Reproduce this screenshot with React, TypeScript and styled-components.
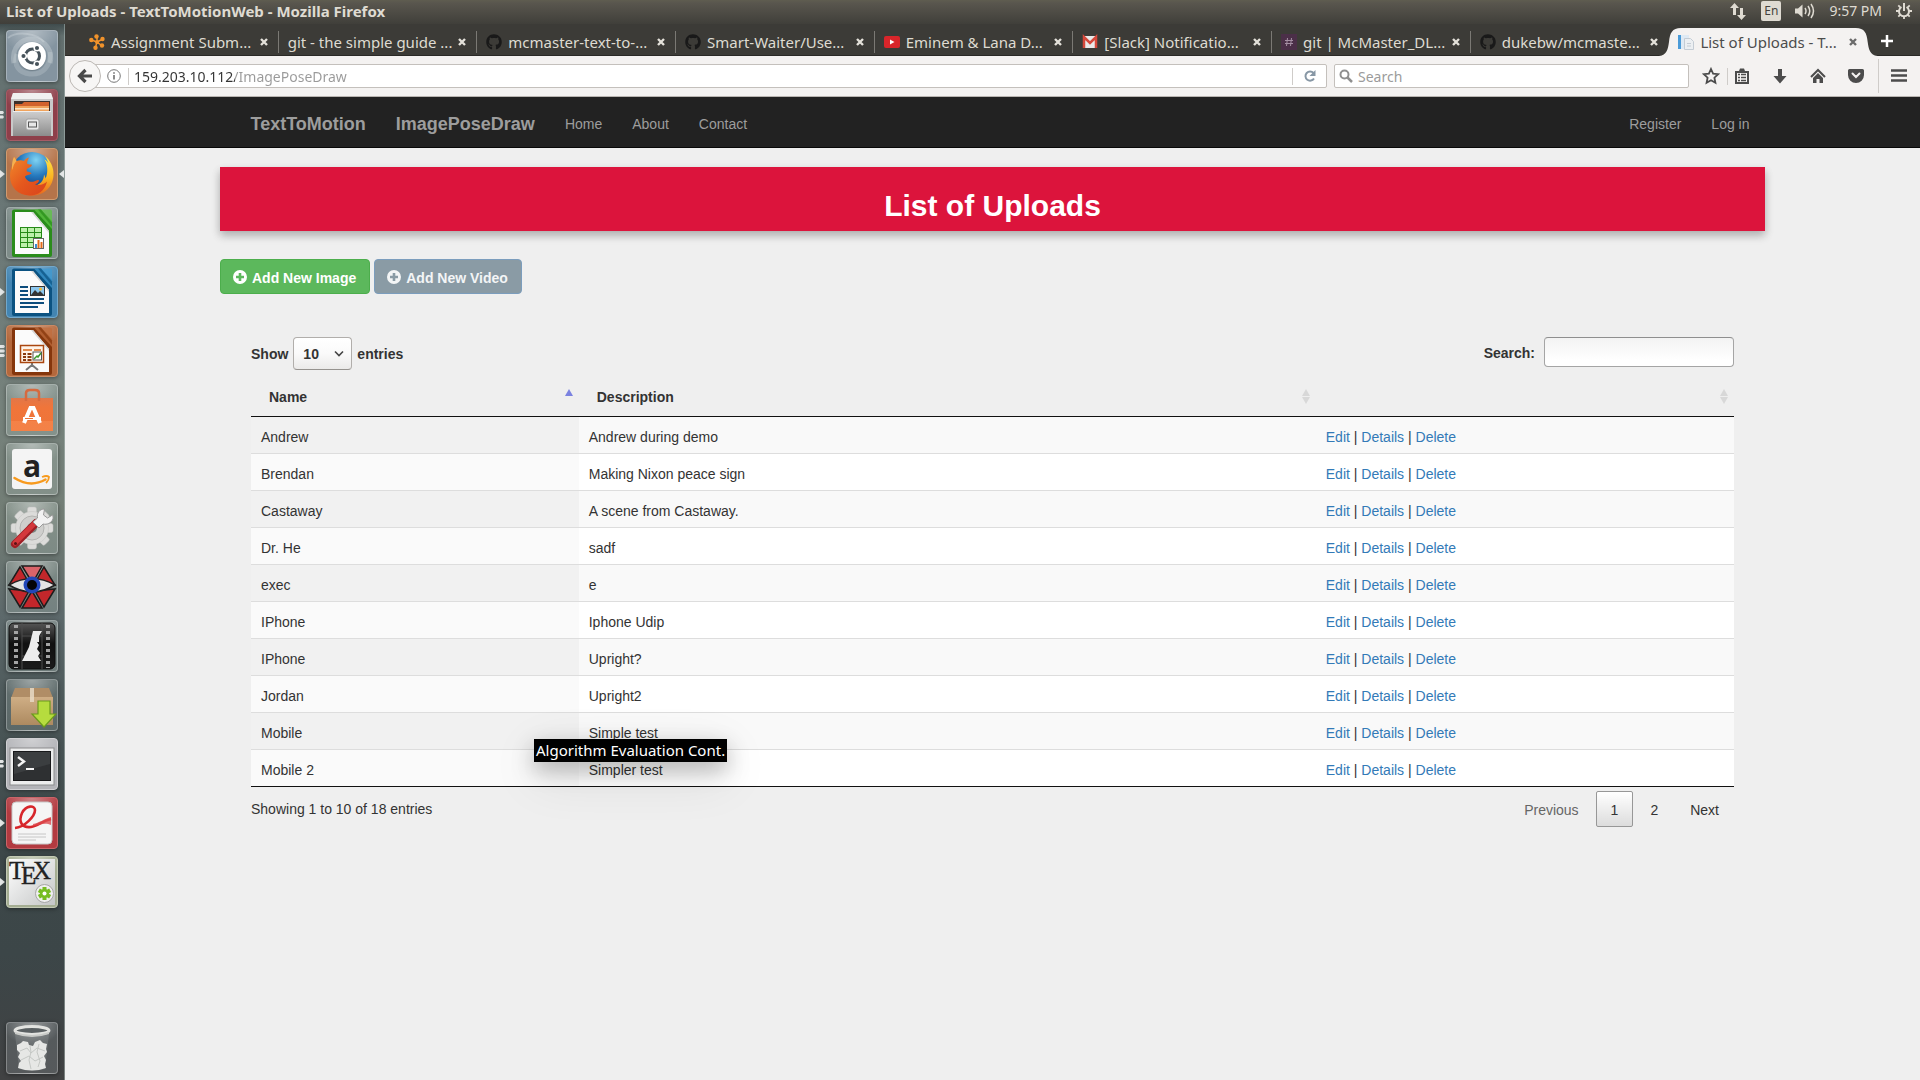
import React from "react";
import styled, { createGlobalStyle, css } from "styled-components";
import { FaGithub } from "react-icons/fa";

const uiFont = `"Noto Sans", "Open Sans", sans-serif`;
const pageFont = `"Liberation Sans", Arial, sans-serif`;

const GlobalStyle = createGlobalStyle`
  *, *::before, *::after { box-sizing: border-box; }
  body { margin: 0; background: #efefef; }
  button, input, select { font: inherit; color: inherit; margin: 0; }
  button { border: 0; background: none; padding: 0; cursor: pointer; }
  svg { display: block; flex: none; }
`;

const Desktop = styled.div`
  min-height: 100vh;
  display: flex;
  flex-direction: column;
  font-family: ${uiFont};
  font-size: 14px;
  overflow: hidden;
`;

/* ---------- system panel ---------- */

const Panel = styled.header`
  height: 24px;
  flex: none;
  display: flex;
  align-items: center;
  padding: 0 8px 2px 6px;
  background: linear-gradient(#5f5d50 0, #59564e 3px, #403f3a 100%);
  color: #dfdbd2;
`;
const WindowTitle = styled.div`
  font-size: 15px;
  font-weight: 700;
  line-height: 20px;
  flex: 1;
`;
const Indicators = styled.div`
  display: flex;
  align-items: center;
  gap: 14px;
  line-height: 20px;
`;
const Lang = styled.span`
  width: 20px;
  height: 20px;
  border-radius: 2px;
  background: #dfdbd2;
  color: #45433d;
  font-size: 12px;
  line-height: 20px;
  text-align: center;
`;

const Body = styled.div`
  flex: 1;
  display: flex;
`;

/* ---------- launcher ---------- */

const Launcher = styled.nav`
  width: 65px;
  flex: none;
  display: flex;
  flex-direction: column;
  gap: 7px;
  padding: 6px 0;
  border-right: 1px solid rgba(190, 205, 200, 0.45);
  background: linear-gradient(
    #3f4b4c 0, #63706f 12px, #6b7877 20%, #76827c 36%, #727d75 47%,
    #5d696b 56%, #4a5657 66%, #3d4849 78%, #3c4648 88%, #414243 100%
  );
`;
const LauncherRow = styled.div<{ $last?: boolean }>`
  display: flex;
  align-items: center;
  ${(p) => p.$last && css`margin-top: auto;`}
`;
const Mark = styled.span`
  width: 6px;
  flex: none;
`;
const Tile = styled.button<{ $tint: string; $edge?: string }>`
  width: 52px;
  height: 52px;
  flex: none;
  border-radius: 4px;
  overflow: hidden;
  border: 1px solid ${(p) => p.$edge || "rgba(255,255,255,.28)"};
  background:
    radial-gradient(ellipse 60% 45% at 50% 0, rgba(255, 255, 255, 0.38), rgba(255, 255, 255, 0) 100%),
    ${(p) => p.$tint};
  box-shadow: 0 1px 4px rgba(0, 0, 0, 0.4);
  & > svg { margin: -1px; }
`;

/* ---------- browser ---------- */

const Browser = styled.div`
  flex: 1;
  min-width: 0;
  display: flex;
  flex-direction: column;
`;
const TabStrip = styled.div`
  height: 32px;
  flex: none;
  display: flex;
  padding-left: 15px;
  background: #3c3b37;
  border-bottom: 1px solid #2a2926;
`;
const Tab = styled.div<{ $active?: boolean; $rule?: boolean }>`
  position: relative;
  flex: 1;
  min-width: 0;
  display: flex;
  align-items: center;
  padding: 4px 9px 0 9px;
  font-size: 15px;
  line-height: 20px;
  color: ${(p) => (p.$active ? "#4c4c4c" : "#dfdbd2")};
  ${(p) => p.$rule && css`
    background: linear-gradient(#7b7974, #7b7974) right 7px / 1px 22px no-repeat;
  `}
`;
const ActiveShape = styled.svg`
  position: absolute;
  left: -10px;
  top: 4px;
  width: calc(100% + 20px);
  height: 28px;
`;
const TabLabel = styled.button`
  position: relative;
  flex: 1;
  min-width: 0;
  display: flex;
  align-items: center;
  gap: 6px;
  white-space: nowrap;
  text-align: left;
`;
const TabClose = styled.button`
  position: relative;
  width: 12px;
  height: 12px;
`;
const NewTab = styled.button`
  width: 52px;
  padding: 3px 0 0 12px;
`;

const Toolbar = styled.div`
  height: 41px;
  flex: none;
  display: flex;
  align-items: center;
  padding: 0 13px 0 4px;
  background: #f4f2f1;
  border-bottom: 1px solid #b9b5b1;
`;
const Back = styled.button`
  position: relative;
  z-index: 1;
  width: 32px;
  height: 32px;
  flex: none;
  display: grid;
  place-items: center;
  border-radius: 50%;
  border: 1px solid #bcb8b4;
  background: #f7f6f5;
`;
const field = css`
  height: 24px;
  display: flex;
  align-items: center;
  background: #fff;
  border: 1px solid #c4c0bc;
`;
const UrlBox = styled.div`
  ${field}
  flex: 1;
  min-width: 0;
  margin-left: -8px;
  padding-left: 13px;
  border-radius: 0 2px 2px 0;
`;
const Divider = styled.span<{ $tall?: boolean }>`
  width: 1px;
  height: ${(p) => (p.$tall ? "34px" : "17px")};
  background: #cfccc9;
`;
const UrlInput = styled.input`
  flex: 1;
  min-width: 0;
  height: 22px;
  margin: 0 5px;
  padding: 0;
  border: 0;
  outline: 0;
  color: transparent;
  background: linear-gradient(90deg, #333 101px, #9a9a9a 101px);
  -webkit-background-clip: text;
  background-clip: text;
`;
const ToolGap = styled.span<{ $w: number }>`
  width: ${(p) => p.$w}px;
  flex: none;
`;
const ToolButton = styled.button`
  width: 38px;
  height: 24px;
  flex: none;
  display: grid;
  place-items: center;
`;
const Reload = styled(ToolButton)`
  width: 33px;
`;
const StarButton = styled(ToolButton)`
  width: 32px;
`;
const ClipButton = styled(ToolButton)`
  width: 28px;
  margin-right: 5px;
`;
const MenuButton = styled(ToolButton)`
  width: 28px;
  padding-left: 12px;
`;
const SearchBox = styled.label`
  ${field}
  width: 355px;
  margin: 0 6px 0 7px;
  padding-left: 4px;
  gap: 5px;
  border-radius: 2px;
`;
const BrowserSearch = styled.input`
  flex: 1;
  min-width: 0;
  border: 0;
  outline: 0;
  padding: 0;
  background: none;
  &::placeholder { color: #9b9b9b; opacity: 1; }
`;

/* ---------- web page ---------- */

const Page = styled.div`
  position: relative;
  flex: 1;
  background: #efefef;
  color: #333;
  font-family: ${pageFont};
  font-size: 14px;
  line-height: 20px;
`;
const Navbar = styled.nav`
  height: 51px;
  background: #222;
  border-bottom: 1px solid #080808;
`;
const NavInner = styled.div`
  width: calc(80% + 60px);
  margin: 0 auto;
  padding-left: 15px;
  display: flex;
  align-items: center;
  height: 50px;
`;
const NavLink = styled.a<{ $brand?: boolean; $push?: boolean }>`
  padding: 17px 15px 13px;
  color: #9d9d9d;
  text-decoration: none;
  ${(p) => p.$brand && css`font-size: 18px; font-weight: 700;`}
  ${(p) => p.$push && css`margin-left: auto;`}
`;
const Main = styled.main`
  width: calc(80% + 61px);
  margin: 19px auto 0;
`;
const Banner = styled.header`
  height: 64px;
  background: #dc143c;
  box-shadow: 0 4px 8px 0 rgba(0, 0, 0, 0.2), 0 5px 10px 0 rgba(0, 0, 0, 0.1);
  text-align: center;
  padding-top: 22px;
`;
const Title = styled.h1`
  margin: 0;
  color: #fff;
  font-size: 30px;
  line-height: 33px;
  font-weight: 700;
`;
const Actions = styled.div`
  display: flex;
  gap: 4px;
  margin-top: 28px;
`;
const AddLink = styled.a<{ $muted?: boolean }>`
  display: flex;
  align-items: center;
  gap: 5px;
  height: 35px;
  padding: 2px 13px 0 12px;
  border-radius: 4px;
  color: ${(p) => (p.$muted ? "#f3f5f6" : "#fff")};
  background: ${(p) => (p.$muted ? "#8a9ba5" : "#5cb85c")};
  border: 1px solid ${(p) => (p.$muted ? "#7b9dbd" : "#4cae4c")};
  font-weight: 700;
  text-decoration: none;
  & > svg { margin-top: -2px; }
`;
const TableArea = styled.section`
  margin-top: 43px;
  padding: 0 31px;
`;
const Controls = styled.div`
  display: flex;
  justify-content: space-between;
  align-items: flex-start;
  margin-bottom: 6px;
  font-weight: 700;
`;
const Length = styled.label`
  display: flex;
  align-items: center;
  gap: 5px;
`;
const SelectWrap = styled.span`
  display: grid;
  align-items: center;
  & > * { grid-area: 1 / 1; }
  & > svg { justify-self: end; margin-right: 8px; pointer-events: none; }
`;
const LengthSelect = styled.select`
  appearance: none;
  width: 59px;
  height: 33px;
  padding: 0 9px;
  border: 1px solid #b1aeab;
  border-bottom-color: #96938f;
  border-radius: 4px;
  background: linear-gradient(#fff, #fafafa 50%, #ebeae9);
`;
const Filter = styled.label`
  display: flex;
  align-items: flex-start;
  gap: 9px;
  line-height: 32px;
`;
const FilterInput = styled.input`
  width: 190px;
  height: 30px;
  padding: 0 8px;
  border: 1px solid #a5a5a5;
  border-top-color: #8f8f8f;
  border-radius: 4px;
  background: linear-gradient(#f3f3f3, #fff 80%);
`;
const Table = styled.table`
  width: 100%;
  table-layout: fixed;
  border-collapse: separate;
  border-spacing: 0;
  border-bottom: 1px solid #111;
`;
const Col = styled.col<{ $w: string }>`
  width: ${(p) => p.$w};
`;
const Th = styled.th`
  padding: 11px 5px 9px 18px;
  border-bottom: 1px solid #111;
  text-align: left;
`;
const SortButton = styled.button`
  width: 100%;
  min-height: 20px;
  display: flex;
  align-items: center;
  justify-content: space-between;
  font-weight: 700;
`;
const SortLabel = styled.span`
  flex: 1;
  text-align: left;
`;
const Tr = styled.tr`
  & > td { background: #fff; border-top: 1px solid #ddd; }
  & > td:first-child { background: #fafafa; }
  &:nth-child(odd) > td { background: #f9f9f9; }
  &:nth-child(odd) > td:first-child { background: #f1f1f1; }
  &:first-child > td { border-top: 0; }
`;
const Td = styled.td`
  padding: 10px 10px 6px;
`;
const RowLink = styled.a`
  color: #337ab7;
  text-decoration: none;
`;
const Footer = styled.div`
  display: flex;
  justify-content: space-between;
  align-items: flex-start;
  padding-top: 4px;
`;
const Info = styled.div`
  padding-top: 8px;
`;
const Pager = styled.div`
  display: flex;
  gap: 2px;
`;
const PageButton = styled.button<{ $current?: boolean; $dim?: boolean }>`
  padding: 8px 14px 6px;
  border-radius: 2px;
  border: 1px solid ${(p) => (p.$current ? "#979797" : "transparent")};
  color: ${(p) => (p.$dim ? "#666" : "#333")};
  ${(p) => p.$current && css`background: linear-gradient(#fff, #dcdcdc);`}
`;
/* Floating hint that a window below the pointer shows over the page. */
const Tooltip = styled.div`
  position: absolute;
  left: 469px;
  top: 642px;
  height: 23px;
  padding: 0 2px;
  background: #000;
  color: #fff;
  font-family: ${uiFont};
  font-size: 15px;
  line-height: 22px;
  white-space: nowrap;
  box-shadow: 0 8px 22px rgba(0, 0, 0, 0.28), 0 14px 50px rgba(0, 0, 0, 0.12);
`;

/* ---------- launcher drawings ---------- */

const Icon = ({ children }: { children: React.ReactNode }) => (
  <svg width="52" height="52" viewBox="0 0 52 52" aria-hidden="true">{children}</svg>
);

const UbuntuIcon = () => (
  <Icon>
    <g fill="none" stroke="#dfe6e8" strokeOpacity=".3" strokeWidth="5">
      <path d="M8 33C5 17 16 8 27 9c13 1 20 13 17 24" />
      <path d="M44 22c1 15-8 23-20 22C13 43 7 35 11 24" strokeOpacity=".22" />
      <path d="M2 8c10-8 30-4 36 4" strokeWidth="2" />
    </g>
    <circle cx="26" cy="27" r="14" fill="#56646a" opacity=".35" />
    <circle cx="26" cy="26" r="14" fill="#fff" />
    <circle cx="26.500" cy="26" r="7" fill="none" stroke="#46525a" strokeWidth="3" />
    <g stroke="#fff" strokeWidth="1.500" fill="#46525a">
      <circle cx="17.500" cy="26" r="2.800" />
      <circle cx="31" cy="18" r="2.800" />
      <circle cx="31" cy="34" r="2.800" />
    </g>
  </Icon>
);

const FilesIcon = () => (
  <Icon>
    <defs>
      <linearGradient id="fl" x1="0" y1="0" x2="0" y2="1">
        <stop offset="0" stopColor="#cfcfcf" /><stop offset="1" stopColor="#8c8c8c" />
      </linearGradient>
    </defs>
    <path d="M7 4h38l2 6v37H5V10z" fill="#c9c9c9" />
    <path d="M7 4h38l2 6H5z" fill="#f0f0f0" />
    <rect x="8" y="12" width="36" height="12" fill="#3c302c" />
    <path d="M9 15h7l2-2h25v11H9z" fill="#d2622c" />
    <path d="M9 17h34v7H9z" fill="#f0a35c" />
    <path d="M9 19h34v1.500H9z" fill="#fbe3c4" />
    <path d="M7 22h38v25H7z" fill="url(#fl)" />
    <path d="M7 22h38v1H7z" fill="#eee" />
    <rect x="20" y="30" width="13" height="11" rx="2" fill="#e9e9e9" stroke="#a0a0a0" />
    <rect x="22.500" y="33" width="8" height="5" fill="#e7e7e7" stroke="#555" />
  </Icon>
);

const FirefoxIcon = () => (
  <Icon>
    <defs>
      <radialGradient id="ffg" cx=".6" cy=".2" r=".8">
        <stop offset="0" stopColor="#7fd3f3" /><stop offset=".5" stopColor="#2578bd" /><stop offset="1" stopColor="#0f2f6d" />
      </radialGradient>
      <linearGradient id="fff" x1="0" y1="0" x2="1" y2="1">
        <stop offset="0" stopColor="#f08a2c" /><stop offset=".5" stopColor="#e5581d" /><stop offset="1" stopColor="#d8431c" />
      </linearGradient>
      <linearGradient id="ffy" x1="0" y1="0" x2="0" y2="1">
        <stop offset="0" stopColor="#ffe94a" /><stop offset=".55" stopColor="#fbb321" /><stop offset="1" stopColor="#e8641f" />
      </linearGradient>
    </defs>
    <circle cx="26" cy="24" r="20" fill="url(#ffg)" />
    <path d="M39 8c5 4 9 11 8.500 19C47 39 38 47.500 26 47.500c-6 0-11-2-14-5l14-4c8-1 12-6 12-12 1 2 1.500 3 1.500 4 3-6 2-15-1-19 2 1 3 2 4 4-1-3-2-5-3.500-7.500z" fill="url(#ffy)" />
    <path d="M8 9c1 1 2 2.500 2.500 4C13 12 16 12 18 13c1-2 3-3 5-3.500-1 2-2 4-2 6 1 1 3 1 4.500 1 1 1-1 3-4 4-1 1-1 2-.5 3 2 0 4 1 4.500 2-2 2-5 1-6.500 3 1 4 5 6 9 5 3-1 4-2 5-1 0 2-2 3-4 4 5 1 9 0 12-3-2 9-9 14-17 14C12 47.500 4 39 4 28c0-5 1-9 3-12 0-3 0-5 1-7z" fill="url(#fff)" />
    <path d="M8 9c1 1 2 2.500 2.500 4-2 2-3.500 5-4 9-1-3-.5-9 1.500-13z" fill="#f6b04f" />
  </Icon>
);

const DocBase = ({ dark, light, children }: { dark: string; light: string; children: React.ReactNode }) => (
  <Icon>
    <path d="M8 2.500h27L46 14v34a2 2 0 0 1-2 2H8a2 2 0 0 1-2-2V4.500a2 2 0 0 1 2-2z" fill={dark} />
    <path d="M28 2.500h16a2 2 0 0 1 2 2V22z" fill={light} opacity=".75" />
    <path d="M32 2.500h3l11 13v4z" fill={dark} opacity=".7" />
    <path d="M9 5h18l16 19v23H9z" fill="#fbfbfb" />
    <path d="M27 5l16 19v2L25 5z" fill="#d6d6d6" />
    {children}
  </Icon>
);

const CalcIcon = () => (
  <DocBase dark="#2a8c1b" light="#5cc443">
    <rect x="14.500" y="20.500" width="21" height="20" fill="#bdf0ab" stroke="#268a17" />
    <path d="M14 25.500h22M14 30.500h22M14 35.500h22M21.500 20v21M28.500 20v21" stroke="#268a17" />
    <rect x="27.500" y="31.500" width="10" height="10" fill="#fff" stroke="#666" />
    <path d="M29 37h2v4h-2z" fill="#3b8bd0" /><path d="M31.500 33h2v8h-2z" fill="#e46b18" /><path d="M34.500 35h2v6h-2z" fill="#e46b18" />
  </DocBase>
);

const WriterIcon = () => (
  <DocBase dark="#0b5281" light="#3d9ad2">
    <path d="M14 21h8M14 25h8M14 29h8M14 33h24M14 37h24M14 41h18" stroke="#0d4d7d" strokeWidth="2" />
    <rect x="24.500" y="20.500" width="14" height="9" fill="#8cc7ee" stroke="#333" />
    <path d="M25 29l4-5 3 3 2-2 4 4z" fill="#333" /><circle cx="34.500" cy="23" r="1.500" fill="#f4b930" />
  </DocBase>
);

const ImpressIcon = () => (
  <DocBase dark="#85360c" light="#c06c3c">
    <path d="M26 38v4M20 45l6-5 6 5" stroke="#777" strokeWidth="2" fill="none" />
    <rect x="14.500" y="20.500" width="23" height="17" fill="#fff3e8" stroke="#aa4710" strokeWidth="1.500" />
    <path d="M17 25h9M28 25h7" stroke="#e08a4d" strokeWidth="2" />
    <path d="M17 29h3M17 32h3M17 35h3M21.500 29h4M21.500 32h4M21.500 35h4" stroke="#8a3a0e" strokeWidth="2" />
    <rect x="27" y="27" width="8.500" height="8" fill="#fff" stroke="#555" />
    <path d="M28 34l3-3 1 1 3-4" stroke="#3a9a2b" strokeWidth="1.500" fill="none" />
  </DocBase>
);

const SoftwareIcon = () => (
  <Icon>
    <defs>
      <linearGradient id="sw" x1="0" y1="0" x2="0" y2="1">
        <stop offset="0" stopColor="#e27748" /><stop offset=".3" stopColor="#f0753a" /><stop offset="1" stopColor="#ee7439" />
      </linearGradient>
    </defs>
    <path d="M5 14h42v33H5z" fill="url(#sw)" />
    <path d="M20 17V9q0-3 4-3h5q4 0 4 3v8" fill="none" stroke="#d66a3f" strokeWidth="2.500" />
    <path d="M5 37h42v10H5z" fill="#f78b52" opacity=".6" />
    <path d="M18 39l6.500-15h3L34 39" fill="none" stroke="#fff" strokeWidth="4" />
    <path d="M17 34.500h18" stroke="#fff" strokeWidth="3" />
    <path d="M19 34.500h8" stroke="#ee7439" strokeWidth="1" />
  </Icon>
);

const AmazonIcon = () => (
  <Icon>
    <rect x="6" y="6" width="40" height="40" rx="3" fill="#f4f4f4" />
    <text x="26" y="34" textAnchor="middle" fontFamily="Open Sans, sans-serif" fontWeight="700" fontSize="30" fill="#222">a</text>
    <path d="M8.500 35q16 10 31 1.500" stroke="#f79a1d" strokeWidth="2.500" fill="none" strokeLinecap="round" />
    <path d="M36 34q5-2 7 0 0 3-3 6" stroke="#f79a1d" strokeWidth="1.800" fill="none" />
  </Icon>
);

const SettingsIcon = () => (
  <Icon>
    <g fill="#dcdcda" stroke="#c2c2c0" strokeWidth=".5">
      {[0, 45, 90, 135].map((a) => (
        <rect key={a} x="21.500" y="5" width="9" height="42" rx="2" transform={`rotate(${a} 26 26)`} />
      ))}
      <circle cx="26" cy="26" r="16.500" />
    </g>
    <circle cx="26" cy="26" r="12" fill="#cfcfcd" stroke="#b4b4b2" />
    <circle cx="26" cy="26" r="5" fill="#7b8580" />
    <path d="M9 42L30 21" stroke="#9e1f25" strokeWidth="8" strokeLinecap="round" />
    <path d="M9 41L29 21" stroke="#d4383c" strokeWidth="5" strokeLinecap="round" />
    <path d="M27 20l6 6 4-4c4 1 8-1 9.500-4 1-2 .5-4 0-5l-5 3-4-3 1-6c-5 0-8 4-7 9z" fill="#f2f2f2" stroke="#999" />
    <circle cx="9.500" cy="41.500" r="1.500" fill="#5a1216" />
  </Icon>
);

const EyeIcon = () => (
  <Icon>
    <g fill="#c3272b" stroke="#1c1c1c" strokeWidth="1.500">
      <path d="M16 5h20l-9.500 17z" fill="#d9646a" />
      <path d="M14 6L3 24l20-2z" />
      <path d="M38 6l11 18-20-2z" />
      <path d="M3 28l11 18 9-16z" />
      <path d="M49 28L38 46l-9-16z" />
      <path d="M16 47h20L26 30z" />
    </g>
    <path d="M3 24q23-13 46 0-23 14-46 0z" fill="#e4e4e4" stroke="#222" strokeWidth="1.500" />
    <circle cx="26" cy="24" r="8.500" fill="#2347b8" />
    <circle cx="26" cy="24" r="5" fill="#050505" />
  </Icon>
);

const FilmIcon = () => (
  <Icon>
    <defs>
      <linearGradient id="fm" x1="0" y1="0" x2="0" y2="1">
        <stop offset="0" stopColor="#555" /><stop offset=".45" stopColor="#101010" /><stop offset="1" stopColor="#1b1b1b" />
      </linearGradient>
    </defs>
    <rect x="3" y="3" width="46" height="46" rx="5" fill="url(#fm)" stroke="#0c0c0c" />
    <path d="M16 3v46M36 3v46M16 16h20M16 36h20" stroke="#4c4c4c" />
    <path d="M10 5v43M42 5v43" stroke="#a4a4a4" strokeWidth="4" strokeDasharray="3 3" />
    <path d="M27 11h9l-3 5v6h-2l2 3-2 4 3 4-2 3 3 5H16l7-14z" fill="#ededed" />
  </Icon>
);

const BoxIcon = () => (
  <Icon>
    <defs>
      <linearGradient id="bx" x1="0" y1="0" x2="0" y2="1">
        <stop offset="0" stopColor="#cfae85" /><stop offset="1" stopColor="#ad8a60" />
      </linearGradient>
    </defs>
    <path d="M9 9h34l4 10H5z" fill="#b08d66" />
    <path d="M5 18h42v28H5z" fill="url(#bx)" />
    <path d="M24 9h4v14h-4z" fill="#e7d9c5" opacity=".85" />
    <path d="M32 22h12v13h6L38 48 26 35h6z" fill="#b6dc3e" stroke="#6a9a1c" strokeWidth="1.200" />
  </Icon>
);

const TerminalIcon = () => (
  <Icon>
    <rect x="4" y="10" width="44" height="37" fill="#eceded" stroke="#8b8c8d" />
    <rect x="7.500" y="13.500" width="37" height="29" fill="#2e3032" stroke="#17181a" />
    <path d="M8 14h36v12L8 36z" fill="#45474a" opacity=".6" />
    <path d="M12 19l6 4.500-6 4.500" stroke="#f4f4f4" strokeWidth="2.400" fill="none" />
    <path d="M20 31h8" stroke="#f4f4f4" strokeWidth="2" />
  </Icon>
);

const ReaderIcon = () => (
  <Icon>
    <rect x="6" y="5" width="40" height="42" rx="4" fill="#f5f5f5" stroke="#c7c7c7" />
    <path d="M9 31c10-1 20-12 20-18 0-5-9-5-13 3-4 9 0 15 9 14 7-1 11-6 20-8" fill="none" stroke="#d7262b" strokeWidth="2.600" />
    <path d="M27 27c6-1 11-5 18-7v8c-6-3-11 0-18 1z" fill="#dc4a4d" opacity=".8" />
    <path d="M12 37h28M12 40h28M12 43h18" stroke="#c6c6c6" />
  </Icon>
);

const TexIcon = () => (
  <Icon>
    <defs>
      <linearGradient id="tx" x1="0" y1="0" x2="1" y2="1">
        <stop offset="0" stopColor="#fff" /><stop offset="1" stopColor="#c4c6c6" />
      </linearGradient>
    </defs>
    <rect x="3" y="3" width="46" height="46" fill="url(#tx)" />
    <g fontFamily="Liberation Serif, serif" fontSize="25" fill="#222" stroke="#222" strokeWidth=".4">
      <text x="3" y="23">T</text>
      <text x="15" y="28">E</text>
      <text x="27" y="23">X</text>
    </g>
    <circle cx="38.500" cy="37.500" r="9" fill="#efefef" stroke="#a5a5a5" />
    <g fill="#76bd22">
      {[0, 60, 120].map((a) => (
        <rect key={a} x="36.500" y="31" width="4" height="13" transform={`rotate(${a} 38.500 37.500)`} />
      ))}
      <circle cx="38.500" cy="37.500" r="4.500" />
    </g>
    <circle cx="38.500" cy="37.500" r="2" fill="#fff" />
  </Icon>
);

const TrashIcon = () => (
  <Icon>
    <path d="M9 12h34l-4 35q-13 3-26 0z" fill="#cdd3d3" opacity=".16" />
    <path d="M11 23l4-2 2-2 5 1 1 3 4 1 2-4 5-2 3 3 4 1-1 5 1 3-3 4 2 4-1 4 1 4q-14 5-28 0l1-5 2-2-3-4 2-4-3-3z" fill="#e6e7e5" />
    <path d="M14 29l7-3 4 5 6-5 8 3M15 38l8-4 6 5 8-4M24 24l1 6-2 8 2 9M33 22l-2 8 3 9-2 6" stroke="#c4c7c4" fill="none" />
    <ellipse cx="26" cy="8.500" rx="17" ry="4" fill="#5a6062" stroke="#e2e3e0" strokeWidth="3" />
    <path d="M9 10q17 6 34 0v2q-17 6-34 0z" fill="#c9cbc8" />
  </Icon>
);

type App = {
  name: string;
  tint: string;
  edge?: string;
  icon: React.ReactNode;
  mark?: "arrow" | "two" | "three";
  focused?: boolean;
};

const clear = "rgba(170,185,178,.3)";
const apps: App[] = [
  { name: "Dash", tint: "#8494a0", icon: <UbuntuIcon /> },
  { name: "Files", tint: "#8e3f4a", edge: "#a65b65", icon: <FilesIcon />, mark: "two" },
  { name: "Firefox", tint: "#b5744a", edge: "#cf9b70", icon: <FirefoxIcon />, mark: "arrow", focused: true },
  { name: "LibreOffice Calc", tint: clear, icon: <CalcIcon /> },
  { name: "LibreOffice Writer", tint: "#4385b2", edge: "#72a8cb", icon: <WriterIcon />, mark: "arrow" },
  { name: "LibreOffice Impress", tint: "#b4683c", edge: "#ca8a64", icon: <ImpressIcon />, mark: "three" },
  { name: "Software", tint: clear, icon: <SoftwareIcon /> },
  { name: "Amazon", tint: clear, icon: <AmazonIcon /> },
  { name: "System Settings", tint: clear, icon: <SettingsIcon /> },
  { name: "Eye viewer", tint: clear, icon: <EyeIcon /> },
  { name: "Film editor", tint: clear, icon: <FilmIcon /> },
  { name: "Package installer", tint: "rgba(170,185,178,.2)", icon: <BoxIcon /> },
  { name: "Terminal", tint: "#b3b4b8", edge: "#d0d0d3", icon: <TerminalIcon />, mark: "two" },
  { name: "Document reader", tint: "#b23a40", edge: "#c96468", icon: <ReaderIcon />, mark: "arrow" },
  { name: "TeX editor", tint: "#a4ad92", edge: "#c3cab4", icon: <TexIcon />, mark: "arrow" },
];

const RunMark = ({ kind }: { kind?: App["mark"] }) => (
  <Mark>
    {kind === "arrow" && (
      <svg width="6" height="10" viewBox="0 0 6 10"><path d="M0 1v8l5-4z" fill="#e3e6e6" /></svg>
    )}
    {kind === "two" && (
      <svg width="6" height="10" viewBox="0 0 6 10"><path d="M0 1h3l1 1.500L3 4H0zM0 5.500h3L4 7 3 8.500H0z" fill="#e3e6e6" /></svg>
    )}
    {kind === "three" && (
      <svg width="6" height="14" viewBox="0 0 6 14"><path d="M0 1h4l1 1.500L4 4H0zM0 5.500h4L5 7 4 8.500H0zM0 10h4l1 1.500L4 13H0z" fill="#e3e6e6" /></svg>
    )}
  </Mark>
);

/* ---------- tab drawings ---------- */

const FlowerIcon = () => (
  <svg width="16" height="16" viewBox="0 0 16 16" fill="#f0922b">
    <g stroke="#f0922b" strokeWidth="1.500">
      <path d="M8 8V2.500M8 8l5-2.500M8 8l4.500 3.500M8 8l-1.500 5.500M8 8L2.500 6" />
    </g>
    <circle cx="7.500" cy="2.500" r="2.200" /><circle cx="13.500" cy="5" r="2.200" /><circle cx="13" cy="11.500" r="2.200" />
    <circle cx="6.500" cy="13.700" r="2.200" /><circle cx="2.300" cy="6" r="2.200" /><circle cx="8" cy="8" r="2" />
  </svg>
);
const YoutubeIcon = () => (
  <svg width="16" height="16" viewBox="0 0 16 16">
    <rect y="2" width="16" height="12" rx="2" fill="#d9252a" /><path d="M6 5.500v5L10.500 8z" fill="#fff" />
  </svg>
);
const GmailIcon = () => (
  <svg width="16" height="16" viewBox="0 0 16 16">
    <rect x="1" y="2" width="14" height="12" fill="#e9e9e9" />
    <path d="M2 14V3l6 6 6-6v11" stroke="#d5483b" strokeWidth="2.500" fill="none" />
  </svg>
);
const SlackIcon = () => (
  <svg width="16" height="16" viewBox="0 0 16 16">
    <rect width="16" height="16" fill="#4b2f48" />
    <path d="M6.500 4l-1 8M10.500 4l-1 8M4 6.500h8M4 9.500h8" stroke="#a58fa4" />
  </svg>
);
const UploadsIcon = () => (
  <svg width="16" height="16" viewBox="0 0 16 16">
    <path d="M0 1h3v14H0z" fill="#4b9bd8" /><path d="M3 1h8v14H3z" fill="#dfeaf4" />
    <path d="M6.500 4.500h6l3 3v8h-9z" fill="#eceff2" stroke="#c4ccd4" />
    <path d="M9 9.500h4M9 12h4" stroke="#c4ccd4" />
  </svg>
);
const Octo = () => <FaGithub size={16} color="#191919" />;

const tabs: { label: string; icon?: React.ReactNode; active?: boolean }[] = [
  { label: "Assignment Subm...", icon: <FlowerIcon /> },
  { label: "git - the simple guide ..." },
  { label: "mcmaster-text-to-...", icon: <Octo /> },
  { label: "Smart-Waiter/Use...", icon: <Octo /> },
  { label: "Eminem & Lana D...", icon: <YoutubeIcon /> },
  { label: "[Slack] Notificatio...", icon: <GmailIcon /> },
  { label: "git | McMaster_DL...", icon: <SlackIcon /> },
  { label: "dukebw/mcmaste...", icon: <Octo /> },
  { label: "List of Uploads - T...", icon: <UploadsIcon />, active: true },
];

const Cross = ({ color }: { color: string }) => (
  <svg width="12" height="12" viewBox="0 0 12 12">
    <path d="M3 3l6 6M9 3l-6 6" stroke={color} strokeWidth="2.400" />
  </svg>
);

/* ---------- page data ---------- */

const uploads = [
  ["Andrew", "Andrew during demo"],
  ["Brendan", "Making Nixon peace sign"],
  ["Castaway", "A scene from Castaway."],
  ["Dr. He", "sadf"],
  ["exec", "e"],
  ["IPhone", "Iphone Udip"],
  ["IPhone", "Upright?"],
  ["Jordan", "Upright2"],
  ["Mobile", "Simple test"],
  ["Mobile 2", "Simpler test"],
];

const PlusCircle = () => (
  <svg width="14" height="14" viewBox="0 0 14 14">
    <path fillRule="evenodd" fill="currentColor" d="M7 0a7 7 0 1 1 0 14A7 7 0 0 1 7 0zM5.700 3v2.700H3v2.600h2.700V11h2.600V8.300H11V5.700H8.300V3z" />
  </svg>
);

const SortIcon = ({ sorted }: { sorted?: boolean }) => (
  <svg width="10" height="16" viewBox="0 0 10 16">
    <path d="M5 0l4 7H1z" fill={sorted ? "#7b82e0" : "#d8d8d8"} />
    {!sorted && <path d="M5 15l4-7H1z" fill="#d8d8d8" />}
  </svg>
);

export default function App() {
  return (
    <Desktop>
      <GlobalStyle />
      <Panel>
        <WindowTitle>List of Uploads - TextToMotionWeb - Mozilla Firefox</WindowTitle>
        <Indicators>
          <svg width="18" height="18" viewBox="0 0 18 18" fill="#dfdbd2">
            <path d="M5.500 1l4.500 5H7v7H4V6H1zM12.500 18L8 13h3V6h3v7h3z" />
          </svg>
          <Lang>En</Lang>
          <svg width="20" height="16" viewBox="0 0 20 16">
            <path d="M0 5.500h3L7.500 1.500v13L3 10.500H0z" fill="#dfdbd2" />
            <path d="M10 5q2 3 0 6M13 3q3.500 5 0 10M16 1q5 7 0 14" stroke="#dfdbd2" strokeWidth="1.500" fill="none" />
          </svg>
          <span>9:57 PM</span>
          <svg width="16" height="16" viewBox="0 0 16 16">
            <g stroke="#dfdbd2" fill="none">
              <path d="M5.500 4A5 5 0 1 0 10.500 4" strokeWidth="2" />
              <path d="M8 0v8" strokeWidth="2" />
              <path d="M0 8h3M13 8h3M8 13v3M2.300 2.300l2 2M13.700 2.300l-2 2M2.300 13.700l2-2M13.700 13.700l-2-2" strokeWidth="1.800" />
            </g>
          </svg>
        </Indicators>
      </Panel>

      <Body>
        <Launcher aria-label="Launcher">
          {apps.map((a) => (
            <LauncherRow key={a.name}>
              <RunMark kind={a.mark} />
              <Tile $tint={a.tint} $edge={a.edge} aria-label={a.name}>{a.icon}</Tile>
              {a.focused && (
                <svg width="6" height="10" viewBox="0 0 6 10"><path d="M6 1v8L1 5z" fill="#e3e6e6" /></svg>
              )}
            </LauncherRow>
          ))}
          <LauncherRow $last>
            <Mark />
            <Tile $tint="rgba(150,160,165,.25)" aria-label="Trash"><TrashIcon /></Tile>
          </LauncherRow>
        </Launcher>

        <Browser>
          <TabStrip>
            {tabs.map((t, i) => (
              <Tab key={t.label} $active={t.active} $rule={i < 7}>
                {t.active && (
                  <ActiveShape viewBox="0 0 219 28" preserveAspectRatio="none">
                    <path d="M0 28C8 27 9 21 10 14 11 5 13 0 22 0h175c9 0 11 5 12 14 1 7 2 13 10 14z" fill="#f4f2f1" />
                  </ActiveShape>
                )}
                <TabLabel>{t.icon}{t.label}</TabLabel>
                <TabClose aria-label={`Close ${t.label}`}>
                  <Cross color={t.active ? "#6b6b6b" : "#e4e1da"} />
                </TabClose>
              </Tab>
            ))}
            <NewTab aria-label="New tab">
              <svg width="14" height="14" viewBox="0 0 14 14">
                <path d="M7 1v12M1 7h12" stroke="#fff" strokeWidth="2.500" />
              </svg>
            </NewTab>
          </TabStrip>

          <Toolbar>
            <Back aria-label="Back">
              <svg width="16" height="16" viewBox="0 0 16 16">
                <path d="M8.500 2L2.500 8l6 6M3 8h12" stroke="#4a4a4a" strokeWidth="3.200" fill="none" />
              </svg>
            </Back>
            <UrlBox>
              <svg width="14" height="14" viewBox="0 0 14 14">
                <circle cx="7" cy="7" r="6.300" fill="none" stroke="#777" />
                <path d="M7 6v4.500M7 3.300v1.400" stroke="#666" strokeWidth="1.500" />
              </svg>
              <ToolGap $w={7} />
              <Divider />
              <UrlInput aria-label="Address" defaultValue="159.203.10.112/ImagePoseDraw" />
              <Divider />
              <Reload aria-label="Reload">
                <svg width="14" height="14" viewBox="0 0 14 14">
                  <path d="M11 9.500A4.600 4.600 0 1 1 10.500 4" stroke="#8797a5" strokeWidth="2" fill="none" />
                  <path d="M12.500 1v6h-6z" fill="#8797a5" />
                </svg>
              </Reload>
            </UrlBox>
            <SearchBox>
              <svg width="14" height="14" viewBox="0 0 14 14">
                <circle cx="5.500" cy="5.500" r="4" stroke="#8f8f8f" strokeWidth="2" fill="none" />
                <path d="M8.500 8.500L13 13" stroke="#8f8f8f" strokeWidth="2.500" />
              </svg>
              <BrowserSearch placeholder="Search" aria-label="Search the web" />
            </SearchBox>
            <StarButton aria-label="Bookmark">
              <svg width="18" height="18" viewBox="0 0 18 18">
                <path d="M9 2l2.100 4.700 5 .5-3.700 3.500 1 5L9 13.200l-4.400 2.500 1-5L1.900 7.200l5-.5z" fill="none" stroke="#4c4c4c" strokeWidth="1.800" />
              </svg>
            </StarButton>
            <Divider />
            <ClipButton aria-label="Bookmarks list">
              <svg width="16" height="16" viewBox="0 0 16 16">
                <path d="M1 3h4l1-2.500h4L11 3h4v13H1z" fill="#4c4c4c" />
                <path d="M3 5h10v9H3z" fill="#f4f2f1" />
                <path d="M4 6.500h2M7 6.500h5M4 9.500h2M7 9.500h5M4 12.500h2M7 12.500h5" stroke="#4c4c4c" strokeWidth="1.400" />
              </svg>
            </ClipButton>
            <ToolButton aria-label="Downloads">
              <svg width="16" height="16" viewBox="0 0 16 16"><path d="M6 1h4v7h4.500L8 15.500 1.500 8H6z" fill="#4c4c4c" /></svg>
            </ToolButton>
            <ToolButton aria-label="Home">
              <svg width="16" height="16" viewBox="0 0 16 16">
                <path d="M1 9l7-7 7 7" stroke="#4c4c4c" strokeWidth="2" fill="none" />
                <path d="M3 10l5-5 5 5v5H9.500v-4h-3v4H3z" fill="#4c4c4c" />
              </svg>
            </ToolButton>
            <ToolButton aria-label="Pocket">
              <svg width="16" height="16" viewBox="0 0 16 16">
                <path d="M1.500 1h13A1.500 1.500 0 0 1 16 2.500V7A8 8 0 0 1 0 7V2.500A1.500 1.500 0 0 1 1.500 1z" fill="#4c4c4c" />
                <path d="M4.500 5.500L8 9l3.500-3.500" stroke="#f4f2f1" strokeWidth="2" fill="none" strokeLinecap="round" />
              </svg>
            </ToolButton>
            <ToolGap $w={3} />
            <Divider $tall />
            <MenuButton aria-label="Menu">
              <svg width="16" height="14" viewBox="0 0 16 14">
                <path d="M0 1.500h16M0 6.500h16M0 11.500h16" stroke="#4c4c4c" strokeWidth="2.600" />
              </svg>
            </MenuButton>
          </Toolbar>

          <Page>
            <Navbar>
              <NavInner>
                <NavLink $brand href="#">TextToMotion</NavLink>
                <NavLink $brand href="#">ImagePoseDraw</NavLink>
                <NavLink href="#">Home</NavLink>
                <NavLink href="#">About</NavLink>
                <NavLink href="#">Contact</NavLink>
                <NavLink $push href="#">Register</NavLink>
                <NavLink href="#">Log in</NavLink>
              </NavInner>
            </Navbar>

            <Main>
              <Banner><Title>List of Uploads</Title></Banner>
              <Actions>
                <AddLink href="#"><PlusCircle />Add New Image</AddLink>
                <AddLink $muted href="#"><PlusCircle />Add New Video</AddLink>
              </Actions>

              <TableArea>
                <Controls>
                  <Length>
                    Show
                    <SelectWrap>
                      <LengthSelect defaultValue="10">
                        <option>10</option>
                        <option>25</option>
                        <option>50</option>
                        <option>100</option>
                      </LengthSelect>
                      <svg width="10" height="8" viewBox="0 0 10 8">
                        <path d="M1 1.500l4 4 4-4" stroke="#444" strokeWidth="1.600" fill="none" />
                      </svg>
                    </SelectWrap>
                    entries
                  </Length>
                  <Filter>Search: <FilterInput type="search" /></Filter>
                </Controls>

                <Table>
                  <colgroup><Col $w="22.1%" /><Col $w="49.7%" /><Col $w="28.2%" /></colgroup>
                  <thead>
                    <tr>
                      <Th><SortButton><SortLabel>Name</SortLabel><SortIcon sorted /></SortButton></Th>
                      <Th><SortButton><SortLabel>Description</SortLabel><SortIcon /></SortButton></Th>
                      <Th><SortButton aria-label="Sort by actions"><SortLabel /><SortIcon /></SortButton></Th>
                    </tr>
                  </thead>
                  <tbody>
                    {uploads.map(([name, text], i) => (
                      <Tr key={i}>
                        <Td>{name}</Td>
                        <Td>{text}</Td>
                        <Td>
                          <RowLink href="#">Edit</RowLink> | <RowLink href="#">Details</RowLink> | <RowLink href="#">Delete</RowLink>
                        </Td>
                      </Tr>
                    ))}
                  </tbody>
                </Table>

                <Footer>
                  <Info>Showing 1 to 10 of 18 entries</Info>
                  <Pager>
                    <PageButton $dim>Previous</PageButton>
                    <PageButton $current>1</PageButton>
                    <PageButton>2</PageButton>
                    <PageButton>Next</PageButton>
                  </Pager>
                </Footer>
              </TableArea>
            </Main>
            <Tooltip role="tooltip">Algorithm Evaluation Cont.</Tooltip>
          </Page>
        </Browser>
      </Body>
    </Desktop>
  );
}
